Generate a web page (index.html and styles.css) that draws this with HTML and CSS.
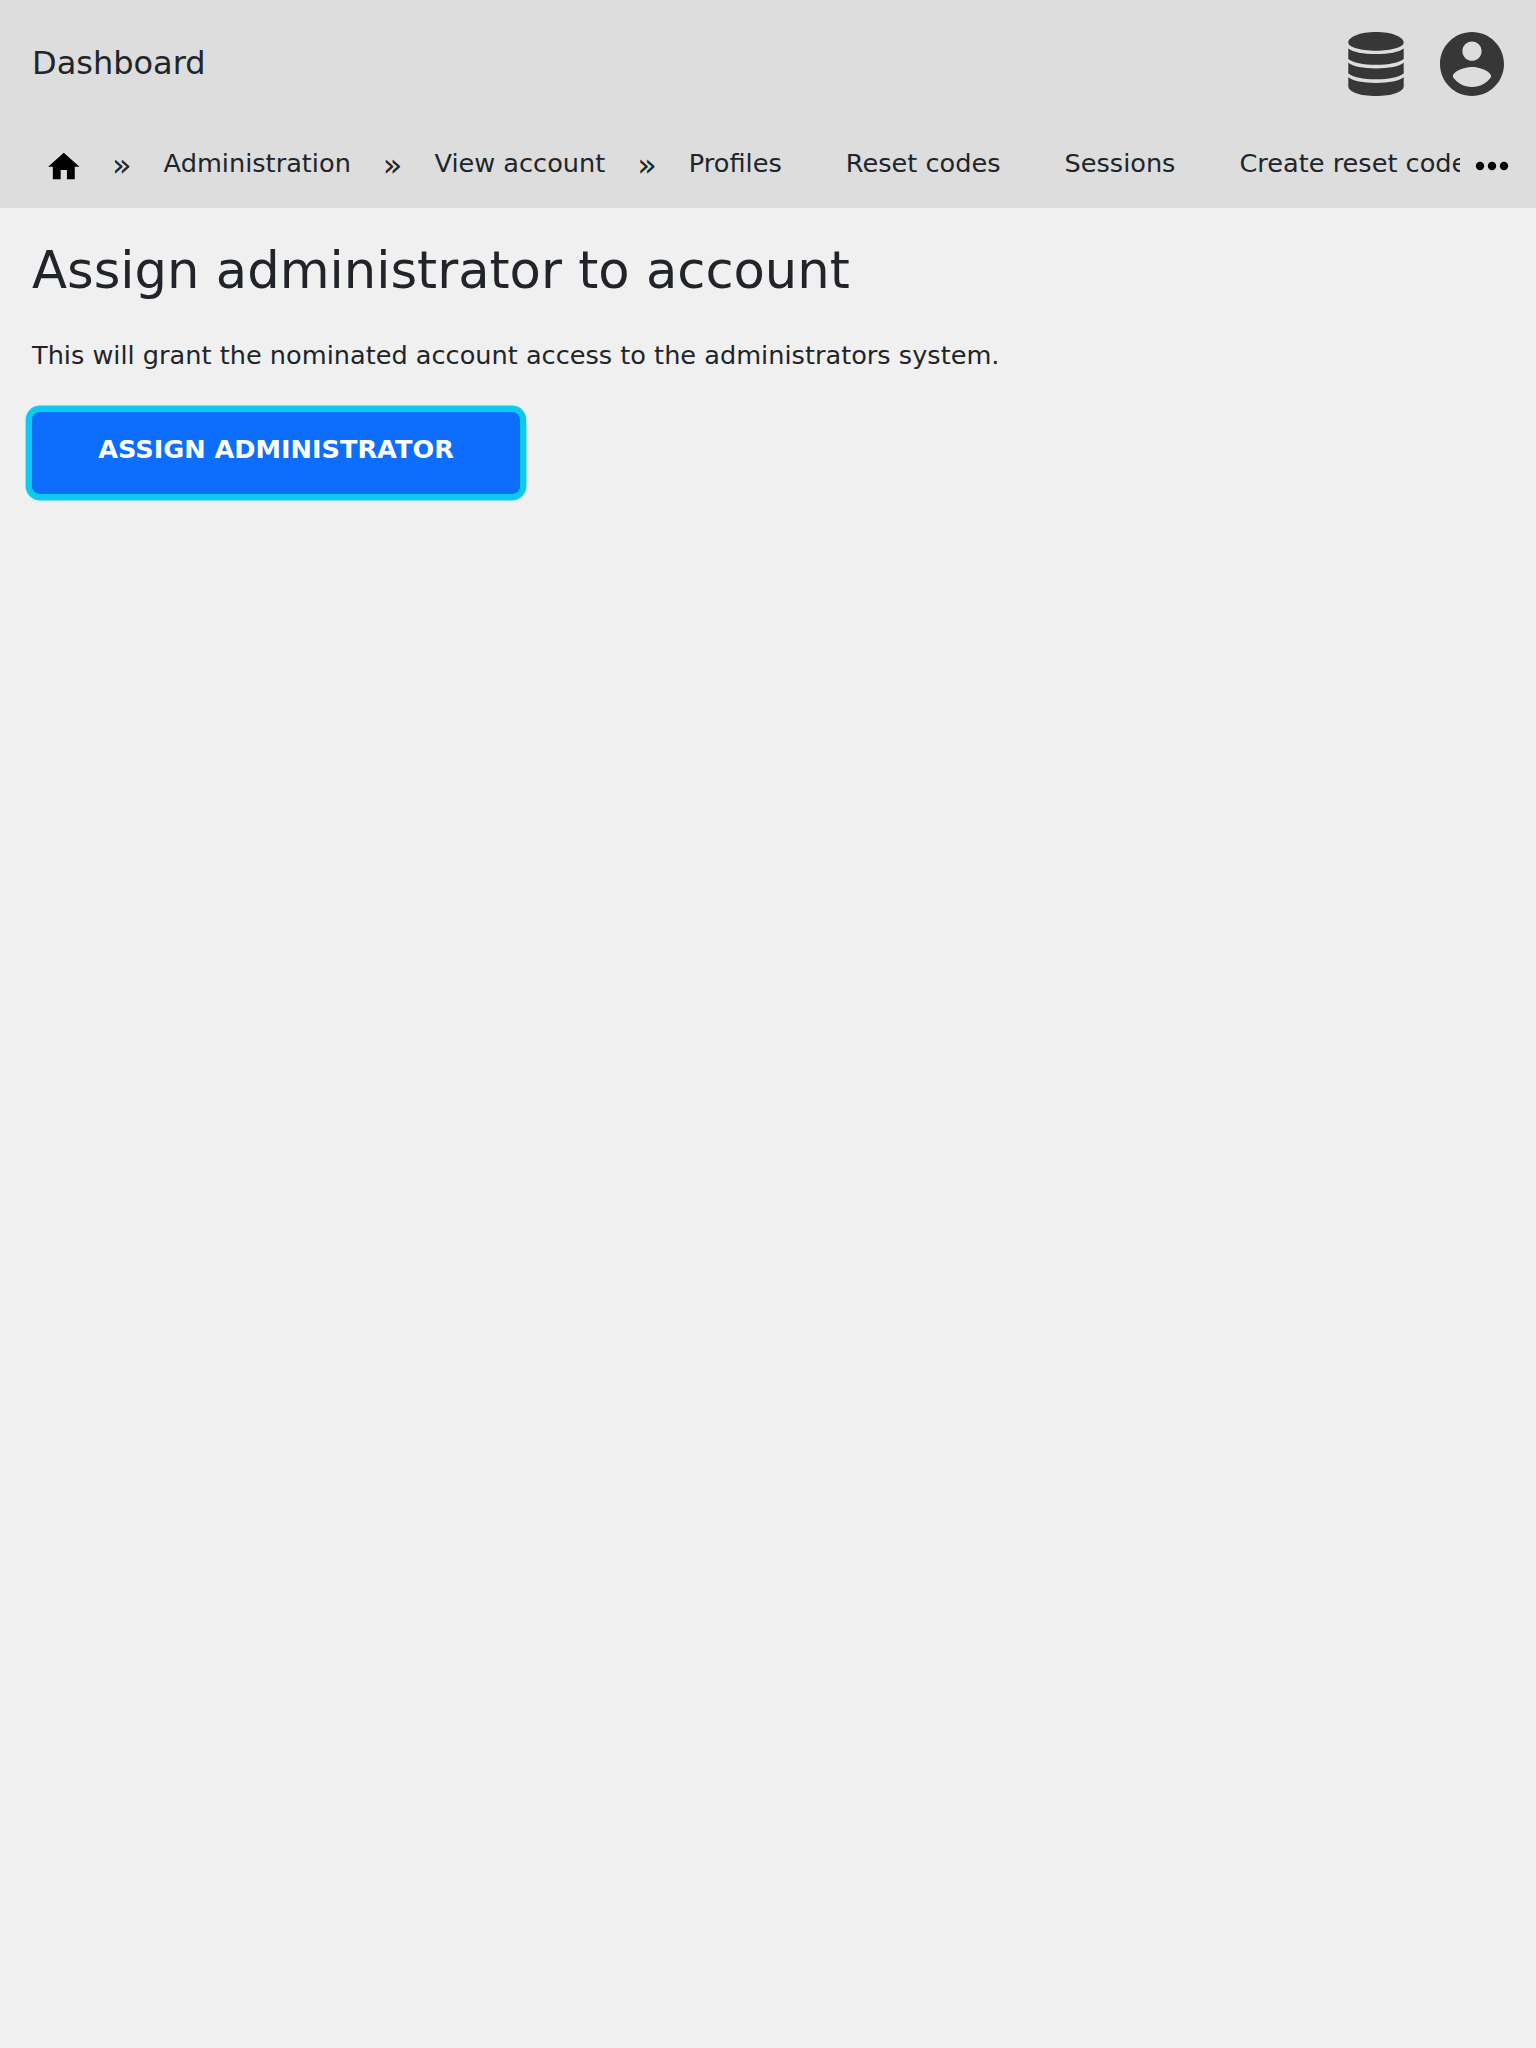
FILE: index.html
```
<!DOCTYPE html>
<html lang="en">
<head>
<meta charset="utf-8">
<title>Assign administrator to account</title>
<link rel="stylesheet" href="styles.css">
</head>
<body>
<header class="header">
  <div class="topbar">
    <a class="brand">Dashboard</a>
    <div class="actions">
      <svg class="icon-db" viewBox="0 0 56 64"><path d="M28 0C44 0 55.700 5 55.700 10.500C55.700 15 44 18.700 28 18.700S.3 15 .3 10.500C.3 5 12 0 28 0ZM.3 16.400C5 20 15 22 28 22S51 20 55.700 16.400V27C51 30.700 41 32.800 28 32.800S5 30.700 .3 27ZM.3 30.800C5 34.400 15 36.500 28 36.500S51 34.400 55.700 30.800V41.500C51 45.200 41 47.300 28 47.300S5 45.200 .3 41.500ZM.3 45.200C5 48.800 15 50.900 28 50.900S51 48.800 55.700 45.200V54C55.700 60 44 64 28 64S.3 60 .3 54Z"/></svg>
      <svg class="icon-account" viewBox="2 2 20 20"><path d="M12 2C6.480 2 2 6.480 2 12s4.480 10 10 10 10-4.480 10-10S17.520 2 12 2zm0 3c1.660 0 3 1.340 3 3s-1.340 3-3 3-3-1.340-3-3 1.340-3 3-3zm0 14.200c-2.500 0-4.710-1.280-6-3.220.03-1.990 4-3.080 6-3.080 1.990 0 5.970 1.090 6 3.080-1.290 1.940-3.500 3.220-6 3.220z"/></svg>
    </div>
  </div>
  <nav class="nav">
    <div class="crumbs">
      <a class="home"><svg class="icon-home" viewBox="0 0 24 24"><path d="M10 20v-6h4v6h5v-8h3L12 3 2 12h3v8z"/></svg></a>
      <span class="sep">»</span>
      <a class="crumb">Administration</a>
      <span class="sep">»</span>
      <a class="crumb">View account</a>
      <span class="sep">»</span>
      <a class="crumb">Profiles</a>
      <a class="crumb">Reset codes</a>
      <a class="crumb">Sessions</a>
      <a class="crumb">Create reset code</a>
    </div>
    <svg class="icon-more" viewBox="0 0 24 24"><circle cx="6" cy="12" r="2.100"/><circle cx="12" cy="12" r="2.100"/><circle cx="18" cy="12" r="2.100"/></svg>
  </nav>
</header>
<main class="content">
  <h1 class="title">Assign administrator to account</h1>
  <p class="intro">This will grant the nominated account access to the administrators system.</p>
  <button class="submit">Assign administrator</button>
</main>
</body>
</html>
```
FILE: styles.css
```
* { box-sizing: border-box; }
body {
  margin: 0;
  min-height: 2048px;
  background: #f0f0f0;
  color: #212529;
  font-family: "DejaVu Sans", sans-serif;
  font-size: 25.6px;
}
.header { height: 208px; background: #ddd; }
.topbar {
  display: flex;
  justify-content: space-between;
  height: 128px;
  padding: 32px 32px 0;
}
.brand { font-size: 32px; line-height: 62px; }
.actions { display: flex; gap: 36px; fill: #373737; }
.icon-db { width: 56px; height: 64px; }
.icon-account { width: 64px; height: 64px; }
.nav { display: flex; height: 80px; }
.crumbs {
  display: flex;
  width: 1460px;
  padding-left: 32px;
  overflow: hidden;
  white-space: nowrap;
}
.home { flex: none; width: 80px; padding: 20.300px 0 0 13.400px; }
.icon-home { display: block; width: 37.600px; height: 37.600px; }
.sep { flex: none; font-size: 32px; line-height: 74px; }
.crumb { flex: none; padding: 0 32px; line-height: 70px; }
.icon-more { flex: none; width: 48px; height: 48px; margin: 14px 0 0 8px; }
.content { padding: 31px 32px 32px; }
.title { margin: 0; font-size: 51.200px; font-weight: 400; line-height: 62px; }
.intro { margin: 35px 0 0; line-height: 38px; }
.submit {
  display: block;
  width: 488px;
  height: 82px;
  margin: 38px 0 0;
  padding: 0 0 9px;
  border: 0;
  border-radius: 8px;
  background: #0d6efd;
  box-shadow: 0 0 0 6.400px #0dcaf0;
  color: #fff;
  font: bold 25.600px "DejaVu Sans", sans-serif;
  text-transform: uppercase;
}
```
